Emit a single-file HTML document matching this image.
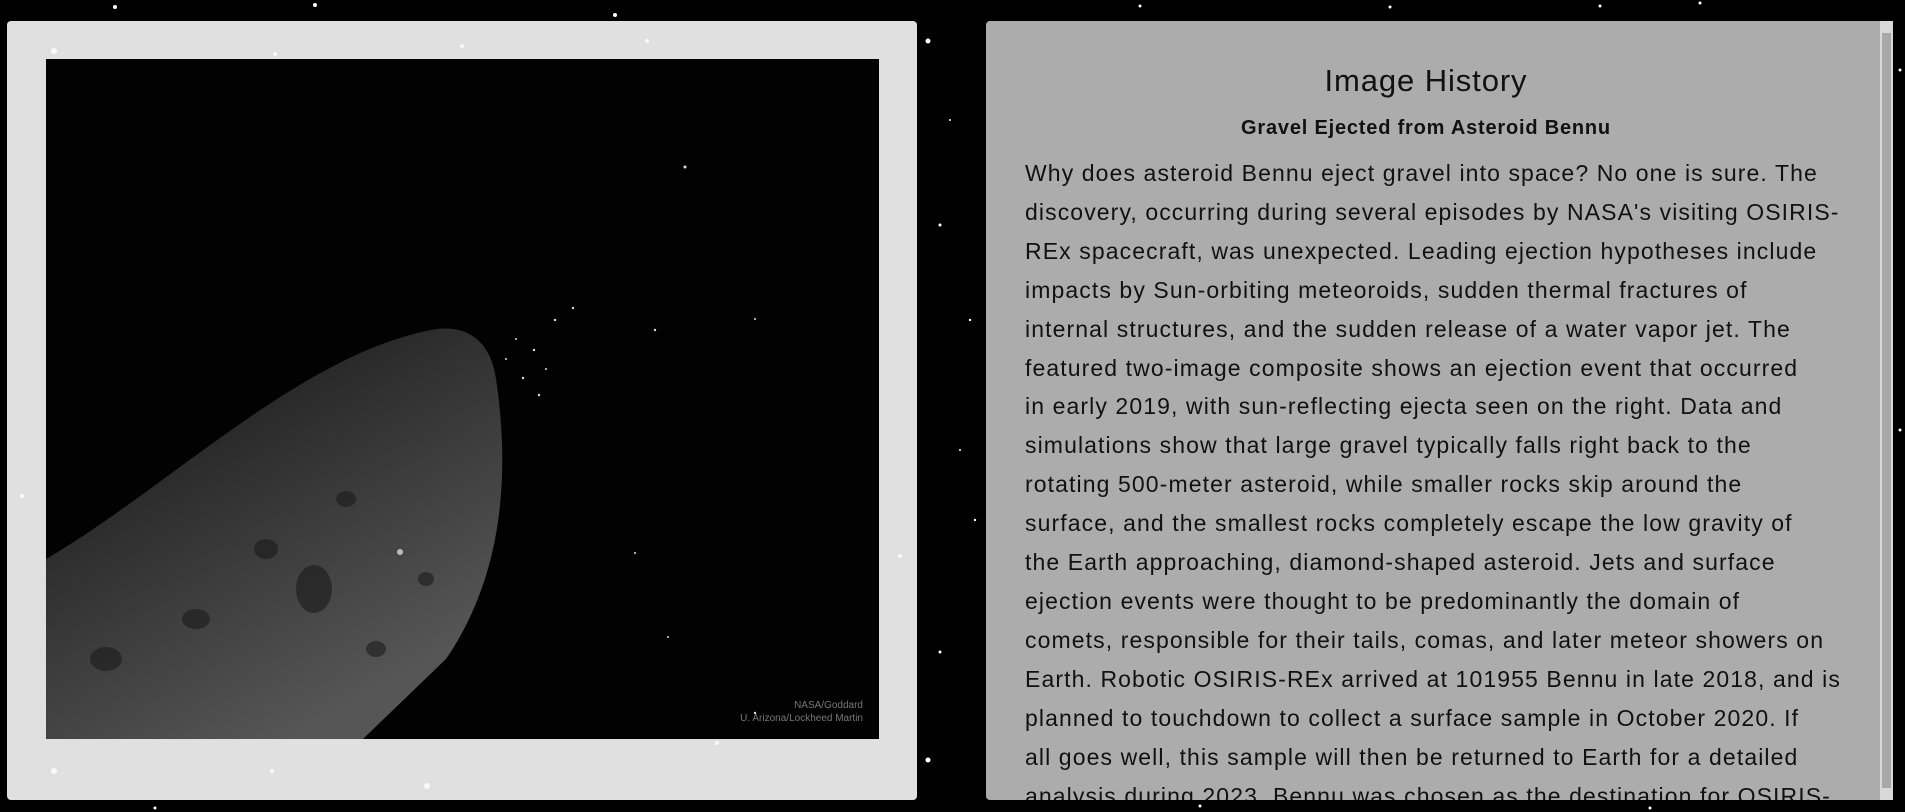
<!DOCTYPE html>
<html><head><meta charset="utf-8">
<style>
html,body{margin:0;padding:0;width:1905px;height:812px;overflow:hidden;background:#000;font-family:"Liberation Sans",sans-serif}
.stars{position:absolute;left:0;top:0}
.left{position:absolute;left:7px;top:21px;width:910px;height:779px;background:#e0e0e0;border-radius:4px}
.img{position:absolute;left:39px;top:38px;width:833px;height:680px;background:#020202;overflow:hidden}
.cred{position:absolute;right:16px;bottom:14px;color:#777;font-size:10px;text-align:right;line-height:13px}
.right{position:absolute;left:986px;top:21px;width:907px;height:779px;background:rgba(185,185,185,.93);border-radius:4px 0 0 4px;overflow:hidden}
.sb{position:absolute;right:0;top:0;width:13px;height:779px;background:#d8d8d8}
.sb div{position:absolute;left:2px;top:12px;width:9px;height:755px;background:#a8a8a8}
h1{position:absolute;left:0;width:880px;top:42px;margin:0;text-align:center;font-weight:normal;font-size:31px;letter-spacing:0.9px;color:#111}
h2{position:absolute;left:0;width:880px;top:96px;margin:0;text-align:center;font-weight:bold;font-size:20px;letter-spacing:0.8px;color:#111}
.txt{position:absolute;left:39px;top:133px;font-size:23px;line-height:38.9px;color:#111;white-space:nowrap;letter-spacing:1.1px}
</style></head><body>
<svg class="stars" width="1905" height="812">
<g fill="#fff">
<circle cx="115" cy="7" r="2"/><circle cx="315" cy="5" r="2"/><circle cx="615" cy="15" r="2"/><circle cx="928" cy="41" r="2.5"/><circle cx="940" cy="225" r="1.5"/><circle cx="940" cy="652" r="1.5"/><circle cx="928" cy="760" r="2.5"/><circle cx="155" cy="808" r="1.5"/><circle cx="960" cy="450" r="1"/><circle cx="950" cy="120" r="1"/>
<circle cx="1140" cy="6" r="1.5"/><circle cx="1390" cy="7" r="1.5"/><circle cx="1600" cy="6" r="1.5"/><circle cx="1700" cy="3" r="1.5"/><circle cx="970" cy="320" r="1.2"/><circle cx="975" cy="520" r="1.2"/><circle cx="1900" cy="70" r="1.5"/><circle cx="1900" cy="430" r="1.5"/><circle cx="1200" cy="806" r="1.5"/><circle cx="1650" cy="808" r="1.5"/>
</g></svg>
<div class="left">
<svg style="position:absolute;left:0;top:0" width="910" height="779"><g fill="#fff" opacity=".8"><circle cx="47" cy="30" r="3"/><circle cx="268" cy="33" r="2"/><circle cx="455" cy="25" r="2"/><circle cx="640" cy="20" r="2"/><circle cx="47" cy="750" r="3"/><circle cx="420" cy="765" r="3"/><circle cx="893" cy="535" r="2"/><circle cx="15" cy="475" r="2"/><circle cx="265" cy="750" r="2"/><circle cx="710" cy="722" r="2"/></g></svg>
<div class="img">
<svg style="position:absolute;left:0;top:0" width="833" height="680">
<defs><linearGradient id="g" x1="0.2" y1="0.1" x2="0.7" y2="0.9"><stop offset="0" stop-color="#1c1c1c"/><stop offset="0.45" stop-color="#363636"/><stop offset="1" stop-color="#565656"/></linearGradient></defs>
<path d="M0,500 C120,430 250,300 380,272 C420,262 445,282 450,320 C465,420 455,520 400,600 L317,680 L0,680 Z" fill="url(#g)"/>
<g fill="#1a1a1a" opacity=".6"><ellipse cx="268" cy="530" rx="18" ry="24"/><ellipse cx="220" cy="490" rx="12" ry="10"/><ellipse cx="150" cy="560" rx="14" ry="10"/><ellipse cx="330" cy="590" rx="10" ry="8"/><ellipse cx="60" cy="600" rx="16" ry="12"/><ellipse cx="380" cy="520" rx="8" ry="7"/><ellipse cx="300" cy="440" rx="10" ry="8"/></g>
<g fill="#ddd"><circle cx="639" cy="108" r="1.5"/><circle cx="527" cy="249" r="1.2"/><circle cx="509" cy="261" r="1.2"/><circle cx="609" cy="271" r="1.2"/><circle cx="488" cy="291" r="1.2"/><circle cx="477" cy="319" r="1.2"/><circle cx="493" cy="336" r="1.2"/><circle cx="460" cy="300" r="1"/><circle cx="470" cy="280" r="1"/><circle cx="500" cy="310" r="1"/><circle cx="709" cy="260" r="1"/><circle cx="589" cy="494" r="1"/><circle cx="709" cy="654" r="1.2"/><circle cx="622" cy="578" r="1"/><circle cx="354" cy="493" r="3" fill="#bbb"/></g></svg>
<div class="cred">NASA/Goddard<br>U. Arizona/Lockheed Martin</div>
</div></div>
<div class="right">
<h1>Image History</h1>
<h2>Gravel Ejected from Asteroid Bennu</h2>
<div class="txt">Why does asteroid Bennu eject gravel into space? No one is sure. The<br>discovery, occurring during several episodes by NASA's visiting OSIRIS-<br>REx spacecraft, was unexpected. Leading ejection hypotheses include<br>impacts by Sun-orbiting meteoroids, sudden thermal fractures of<br>internal structures, and the sudden release of a water vapor jet. The<br>featured two-image composite shows an ejection event that occurred<br>in early 2019, with sun-reflecting ejecta seen on the right. Data and<br>simulations show that large gravel typically falls right back to the<br>rotating 500-meter asteroid, while smaller rocks skip around the<br>surface, and the smallest rocks completely escape the low gravity of<br>the Earth approaching, diamond-shaped asteroid. Jets and surface<br>ejection events were thought to be predominantly the domain of<br>comets, responsible for their tails, comas, and later meteor showers on<br>Earth. Robotic OSIRIS-REx arrived at 101955 Bennu in late 2018, and is<br>planned to touchdown to collect a surface sample in October 2020. If<br>all goes well, this sample will then be returned to Earth for a detailed<br>analysis during 2023. Bennu was chosen as the destination for OSIRIS-</div>
<div class="sb"><div></div></div>
</div>
</body></html>
